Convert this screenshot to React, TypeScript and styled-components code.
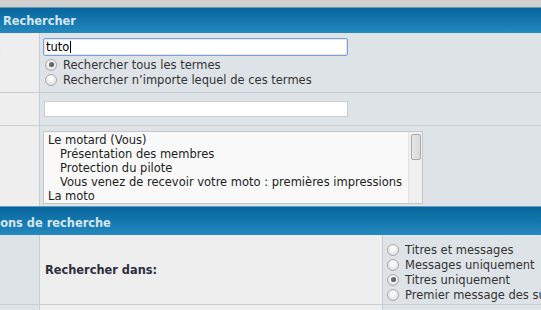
import React from "react";
import styled, { createGlobalStyle, css } from "styled-components";

const GlobalStyle = createGlobalStyle`
  html, body {
    margin: 0;
    padding: 0;
    background: #dee3e7;
    overflow: hidden;
  }
  body {
    font-family: "DejaVu Sans", Verdana, sans-serif;
    font-size: 11.5px;
    color: #333;
  }
`;

const Page = styled.div`
  width: 541px;
  height: 310px;
  overflow: hidden;
`;

const TopStrip = styled.div`
  height: 7px;
  background: #d0d0d0;
`;

const Header = styled.div<{ $tall?: boolean }>`
  height: 25px;
  padding-top: ${(p) => (p.$tall ? "3px" : "0")};
  display: flex;
  align-items: center;
  padding-left: 3px;
  border-top: 1px solid #5f9dc1;
  background: linear-gradient(to bottom, #07659b 0%, #1579b0 55%, #2489bf 100%);
  color: #d5e6f1;
  font-weight: bold;
  font-size: 11.4px;
  white-space: nowrap;
  overflow: hidden;
`;

const HeaderText = styled.span<{ $shift?: number }>`
  margin-left: ${(p) => p.$shift ?? 0}px;
`;

const Row = styled.div<{ $cols: string; $height: number; $last?: boolean }>`
  display: grid;
  grid-template-columns: ${(p) => p.$cols};
  height: ${(p) => p.$height}px;
  border-bottom: ${(p) => (p.$last ? "none" : "1px solid #c9ced3")};
`;

const Cell = styled.div<{ $tone: "light" | "blue"; $pad?: string; $center?: boolean }>`
  background: ${(p) => (p.$tone === "light" ? "#eeeeee" : "#dee3e7")};
  border-right: 1px solid #c9ced3;
  padding: ${(p) => p.$pad ?? "0"};
  min-width: 0;
  overflow: hidden;
  ${(p) =>
    p.$center &&
    css`
      display: flex;
      align-items: center;
    `}
  &:last-child {
    border-right: none;
  }
`;

const Label = styled.div<{ $top: number }>`
  display: flex;
  justify-content: flex-end;
  padding-top: ${(p) => p.$top}px;
  padding-right: 38px;
  white-space: nowrap;
  color: #3a6ea5;
`;

const TextBox = styled.div<{ $focused?: boolean; $w: number; $h: number }>`
  box-sizing: border-box;
  width: ${(p) => p.$w}px;
  height: ${(p) => p.$h}px;
  background: #fff;
  border: 1px solid ${(p) => (p.$focused ? "#7ba1d4" : "#cccccc")};
  border-radius: ${(p) => (p.$focused ? "2px" : "0")};
  box-shadow: ${(p) => (p.$focused ? "inset 0 0 0 1px rgba(123,161,212,0.25)" : "none")};
  padding: 0 2px;
  display: flex;
  align-items: center;
  color: #000;
`;

const Caret = styled.span`
  display: inline-block;
  width: 1px;
  height: 12px;
  background: #000;
  margin-left: 1px;
`;

const RadioList = styled.div<{ $top?: number; $left: number }>`
  display: flex;
  flex-direction: column;
  padding-top: ${(p) => p.$top ?? 0}px;
  padding-left: ${(p) => p.$left}px;
`;

const RadioLine = styled.label`
  display: flex;
  align-items: center;
  gap: 6px;
  height: 15px;
  white-space: nowrap;
  color: #333;
`;

const RadioDot = styled.span<{ $on?: boolean }>`
  box-sizing: border-box;
  width: 12px;
  height: 12px;
  flex: none;
  border-radius: 50%;
  border: 1px solid #a8a8a8;
  background: radial-gradient(circle at 50% 35%, #ffffff 0%, #f0f0f0 45%, #d6d6d6 100%);
  display: flex;
  align-items: center;
  justify-content: center;
  &::after {
    content: "";
    display: ${(p) => (p.$on ? "block" : "none")};
    width: 5px;
    height: 5px;
    border-radius: 50%;
    background: radial-gradient(circle at 40% 40%, #777 0%, #444 100%);
  }
`;

const ListBox = styled.div`
  box-sizing: border-box;
  width: 380px;
  height: 73px;
  display: flex;
  background: #f9f9f9;
  border: 1px solid #c6c6c6;
`;

const Options = styled.div`
  flex: 1;
  padding: 1px 0 0 4px;
  overflow: hidden;
  white-space: nowrap;
  color: #222;
`;

const OptionItem = styled.div<{ $indent?: boolean }>`
  height: 14px;
  line-height: 14px;
  padding-left: ${(p) => (p.$indent ? 12 : 0)}px;
`;

const ScrollTrack = styled.div`
  width: 14px;
  flex: none;
  background: #f0f0f0;
  border-left: 1px solid #e2e2e2;
  padding: 2px 0 0 2px;
  box-sizing: border-box;
`;

const Thumb = styled.div`
  box-sizing: border-box;
  width: 10px;
  height: 26px;
  border: 1px solid #a9a9a9;
  border-radius: 2px;
  background: linear-gradient(to right, #e6e6e6, #d9d9d9);
`;

const Strong = styled.span`
  font-weight: bold;
  font-size: 11.4px;
  color: #2e2e3e;
  padding-left: 5px;
  white-space: nowrap;
`;

const options = [
  { text: "Le motard (Vous)" },
  { text: "Présentation des membres", indent: true },
  { text: "Protection du pilote", indent: true },
  { text: "Vous venez de recevoir votre moto : premières impressions", indent: true },
  { text: "La moto" },
];

const inOptions = [
  { text: "Titres et messages" },
  { text: "Messages uniquement" },
  { text: "Titres uniquement", on: true },
  { text: "Premier message des sujets" },
];

export default function App() {
  return (
    <Page>
      <GlobalStyle />
      <TopStrip />
      <Header>
        <HeaderText>Rechercher</HeaderText>
      </Header>

      <Row $cols="40px 1fr" $height={59}>
        <Cell $tone="light">
          <Label $top={12}>Rechercher par mots-clés :</Label>
        </Cell>
        <Cell $tone="blue" $pad="5px 0 0 3px">
          <TextBox $focused $w={305} $h={18}>
            tuto
            <Caret />
          </TextBox>
          <RadioList $left={2} $top={1}>
            <RadioLine>
              <RadioDot $on />
              Rechercher tous les termes
            </RadioLine>
            <RadioLine>
              <RadioDot />
              Rechercher n’importe lequel de ces termes
            </RadioLine>
          </RadioList>
        </Cell>
      </Row>

      <Row $cols="40px 1fr" $height={32}>
        <Cell $tone="light" />
        <Cell $tone="blue" $pad="8px 0 0 4px">
          <TextBox $w={304} $h={16} />
        </Cell>
      </Row>

      <Row $cols="40px 1fr" $height={80} $last>
        <Cell $tone="light">
          <Label $top={33}>Rechercher dans le forum :</Label>
        </Cell>
        <Cell $tone="blue" $pad="5px 0 0 3px">
          <ListBox>
            <Options>
              {options.map((o) => (
                <OptionItem key={o.text} $indent={o.indent}>
                  {o.text}
                </OptionItem>
              ))}
            </Options>
            <ScrollTrack>
              <Thumb />
            </ScrollTrack>
          </ListBox>
        </Cell>
      </Row>

      <Header $tall>
        <HeaderText $shift={-30}>Options de recherche</HeaderText>
      </Header>

      <Row $cols="40px 343px 1fr" $height={69}>
        <Cell $tone="blue" />
        <Cell $tone="light" $center>
          <Strong>Rechercher dans:</Strong>
        </Cell>
        <Cell $tone="blue" $pad="7px 0 0 4px">
          <RadioList>
            {inOptions.map((o) => (
              <RadioLine key={o.text}>
                <RadioDot $on={o.on} />
                {o.text}
              </RadioLine>
            ))}
          </RadioList>
        </Cell>
      </Row>

      <Row $cols="40px 343px 1fr" $height={20} $last>
        <Cell $tone="blue" />
        <Cell $tone="light" />
        <Cell $tone="blue" />
      </Row>
    </Page>
  );
}
